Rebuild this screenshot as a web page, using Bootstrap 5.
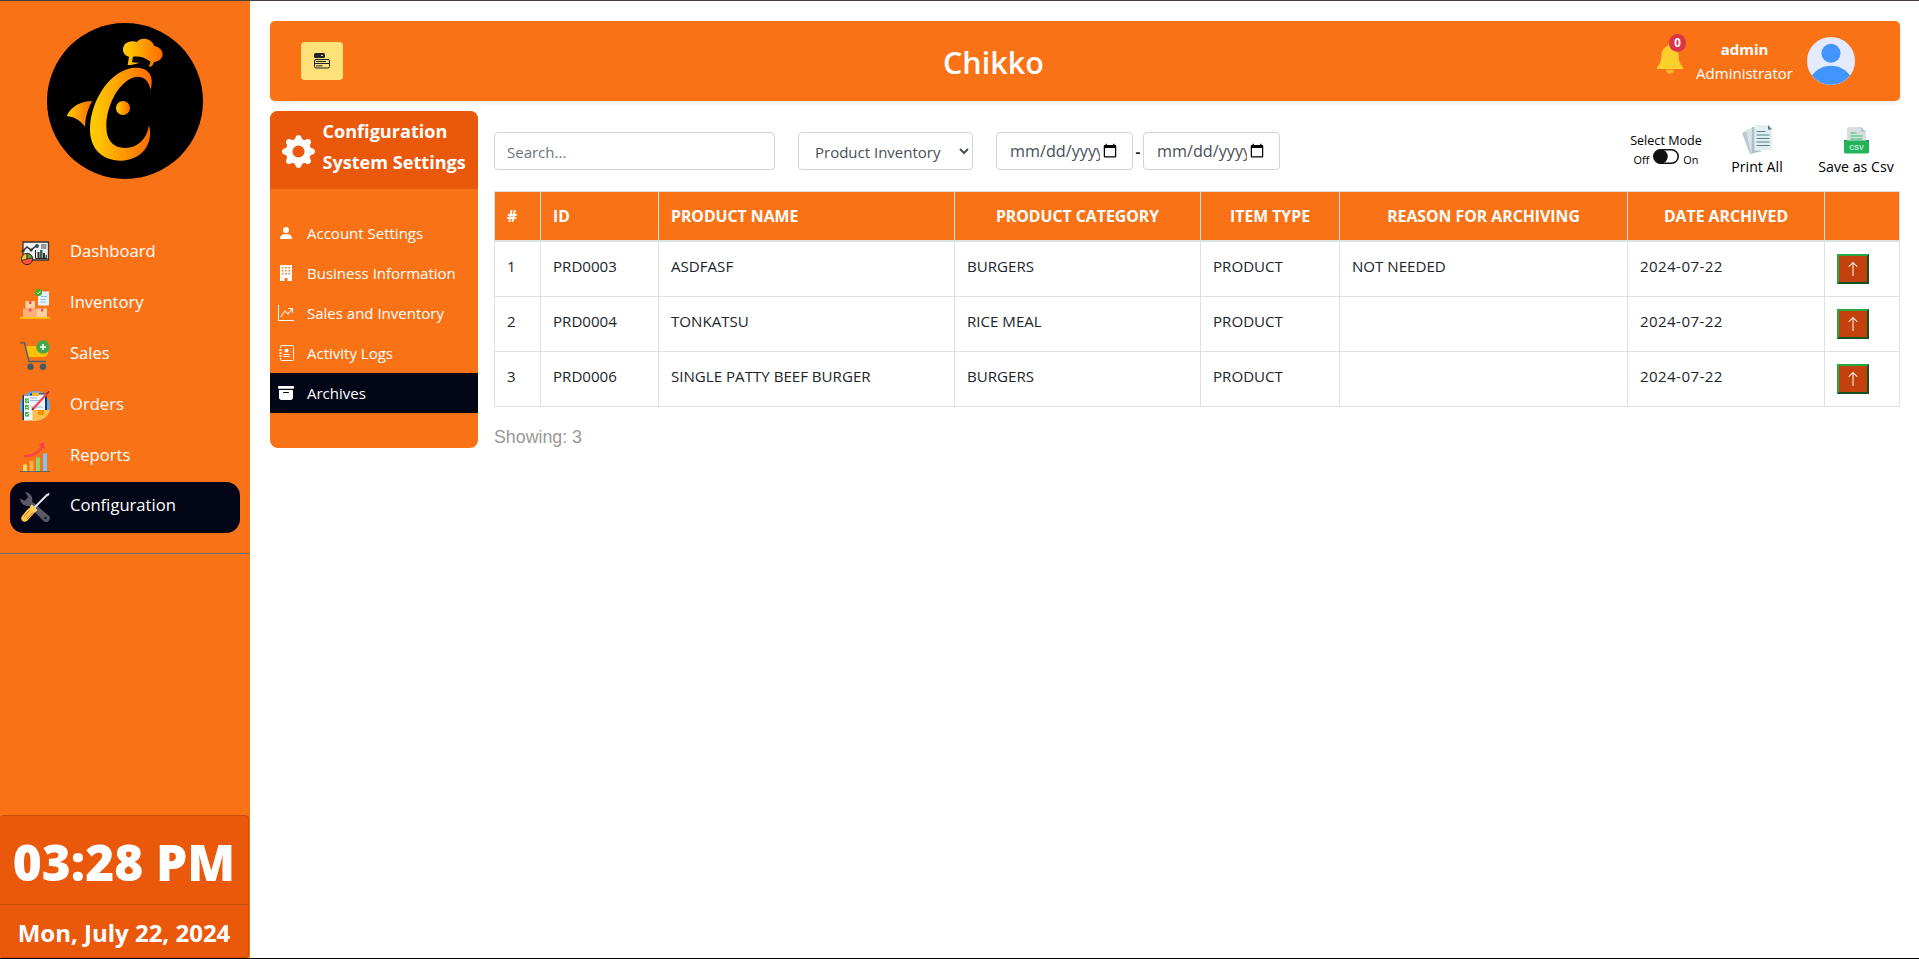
<!DOCTYPE html>
<html lang="en">
<head>
<meta charset="utf-8">
<meta name="viewport" content="width=device-width, initial-scale=1">
<title>Chikko</title>
<link href="https://cdn.jsdelivr.net/npm/bootstrap@5.3.0/dist/css/bootstrap.min.css" rel="stylesheet">
<style>
  :root { --brand: #f97316; --brand-dark: #ea580c; --ink: #020617; }
  html, body { height: 100%; }
  body { font-family: "Open Sans", "Noto Sans", sans-serif; font-size: 15px; color: #212529; overflow: hidden; }
  .app { height: 959px; border-top: 1px solid #47403e; border-bottom: 1px solid #000; }

  /* sidebar */
  .side { width: 250px; background: var(--brand); }
  .logo { width: 156px; height: 156px; margin: 22px 0 49px 47px; flex: none; }
  .side-link { height: 50.8px; margin: 0 10px; padding: 0 10px; gap: 20px; border-radius: 14px; color: #fff; font-size: 16.6px; text-decoration: none; }
  .side-link svg { width: 30px; height: 30px; }
  .side-link span { padding-bottom: 3px; }
  .side-link.active { background: var(--ink); }
  .side-rule { height: 1px; background: #5b7276; margin-top: 20px; flex: none; }
  .clock { width: 249px; height: 143px; background: var(--brand-dark); border: 1px solid #cb4d0d; border-left: 0; border-radius: 4px; color: #fff; text-align: center; }
  .clock-time { height: 89px; line-height: 93px; border-bottom: 1px solid #cb4d0d; font-size: 49.5px; font-weight: 800; white-space: nowrap; }
  .clock-date { line-height: 55px; font-size: 24px; font-weight: 700; white-space: nowrap; }

  /* top bar */
  .main { padding: 20px 20px 0 20px; }
  .topbar { height: 80px; background: var(--brand); border-radius: 5px; color: #fff; box-shadow: 0 2px 4px rgba(0,0,0,.08); padding: 0 45px 0 31px; }
  .menu-btn { width: 42px; height: 38px; border-radius: 4px; background: #fde27a; border: 0; padding: 0; }
  .title { font-size: 30.5px; font-weight: 600; margin: 3px 0 0 600px; line-height: 1; }
  .bell { width: 26px; height: 30px; margin: -5px -1px 0 1px; }
  .count { left: 12px; top: -10px; width: 17px; height: 18px; border-radius: 9px; background: #dc3545; font-size: 11.5px; line-height: 18px; font-weight: 700; text-align: center; }
  .who { margin: 0 14px 0 14px; width: 97px; text-align: center; line-height: 24px; white-space: nowrap; }

  /* settings panel */
  .panel { width: 208px; height: 337px; margin-top: 10px; border-radius: 8px; background: var(--brand); overflow: hidden; color: #fff; }
  .panel-head { height: 78px; background: var(--brand-dark); padding: 5px 0 0 12px; gap: 7.5px; font-size: 18.1px; line-height: 31px; font-weight: 700; white-space: nowrap; }
  .panel-head svg { margin-top: 19px; flex: none; }
  .panel-link { height: 40px; padding: 0 8px; gap: 13px; color: #fff; text-decoration: none; white-space: nowrap; }
  .panel-link.active { background: var(--ink); }

  /* filters and tools */
  .filters { margin-top: 31px; height: 59px; }
  .field { height: 38px; border: 1px solid #ced4da; border-radius: 4px; background: #fff; padding: 7px 12px 5px; color: #495057; font-size: 15px; }
  .field::placeholder { color: #6c757d; }
  .search { width: 281px; margin-right: 23px; }
  select.kind { appearance: auto; width: 175px; margin-right: 23px; padding: 8px 0 6px 12px; }
  .range { height: 38px; }
  .day { width: 137px; padding: 6px 12px 6px 13px; font-size: 16.2px; }
  .dash { width: 10px; text-align: center; }
  .tool { text-align: center; color: #000; white-space: nowrap; font-size: 14.2px; line-height: 22px; }
  .tool svg { display: block; }
  .tool.mode { font-size: 12.6px; line-height: 16px; width: 76px; padding-top: 1px; }
  .mode small { font-size: 10.9px; padding-top: 3px; }
  .toggle-row { gap: 4px; justify-content: center; }
  .print { width: 60px; margin: -7px 0 0 23px; }
  .csv { width: 90px; margin: -5px -1px 0 24px; }
  .print svg { margin: 0 auto 1px; }
  .csv svg { margin: 0 auto 2px; }

  /* archive list */
  .archive { border-collapse: collapse; table-layout: fixed; width: 1406px; font-size: 15.1px; margin: 0; text-transform: uppercase; }
  .archive th, .archive td { border: 1px solid #dee2e6; padding: 12px; vertical-align: top; }
  .archive th { background: var(--brand); color: #fff; height: 49px; border-bottom-width: 2px; text-align: center; font-size: 15.8px; font-weight: 700; white-space: nowrap; line-height: 24px; }
  .archive th:nth-child(-n+3) { text-align: left; }
  .archive td { height: 55px; line-height: 24px; white-space: nowrap; }
  .archive td:nth-child(7) { letter-spacing: .4px; }
  .restore { display: block; width: 32px; height: 30px; padding: 0; background: #c2410c; border: 2px outset #28a745; color: #fff; line-height: 1; }
  .showing { margin-top: 17px; font-family: "Liberation Sans", Arial, sans-serif; font-size: 17.8px; color: #999; }
</style>
</head>
<body>
<svg width="0" height="0" class="position-absolute">
  <defs>
    <linearGradient id="gold"><stop offset="0" stop-color="#ffd000"/><stop offset="1" stop-color="#ff6a00"/></linearGradient>
    <symbol id="up" viewBox="0 0 16 16"><path fill="currentColor" d="M8 15a.5.5 0 0 0 .5-.5V2.707l3.146 3.147a.5.5 0 0 0 .708-.708l-4-4a.5.5 0 0 0-.708 0l-4 4a.5.5 0 1 0 .708.708L7.500 2.707V14.500a.5.5 0 0 0 .5.5z"/></symbol>
  </defs>
</svg>
<div class="app d-flex">
  <aside class="side d-flex flex-column flex-shrink-0">
    <svg class="logo" viewBox="141 69 468 468">
      <circle cx="375" cy="303" r="234"/>
      <g fill="url(#gold)">
        <path d="M452 270C464 222 442 203 408 203C335 203 270 300 270 388C270 446 306 482 362 482C426 482 462 430 447 376C440 420 412 444 375 444C338 444 318 420 319 376C321 300 370 230 415 230C438 231 448 250 452 270Z"/>
        <path d="M200 348C214 319 243 303 277 303C263 328 256 352 255 380C241 362 223 350 200 348Z"/>
        <circle cx="369" cy="324" r="21"/>
        <path d="M383 195L387 170C362 166 361 125 397 124C403 124 408 125 411 126C421 111 454 113 463 138C497 144 496 183 462 186C460 192 458 198 450 201L447 199L452 185C435 172 416 167 399 170L396 187L418 188C406 193 395 195 383 195Z"/>
      </g>
    </svg>
    <nav>
      <a href="#" class="side-link d-flex align-items-center">
        <svg viewBox="0 0 30 30"><path fill="#eef0f2" stroke="#3a3434" stroke-width="1.3" d="M3 4h25.500v18H3z"/><path fill="#9a9a9a" d="M21 6h5.500v5H21z"/><path d="M3 13l4-4 4 3 5-4" fill="none" stroke="#333" stroke-width="1.500"/><circle cx="3" cy="13" r="1.600" fill="#333"/><circle cx="11" cy="12" r="1.500" fill="#333"/><circle cx="17" cy="8" r="1.900" fill="#2d4b63"/><path d="M15.500 12v8.500h12" fill="none" stroke="#222"/><path fill="#4a2720" d="M17.500 14h2v6h-2zM23 15h2v5h-2z"/><path fill="#286b60" d="M20 12h2.500v8H20zM25.500 17h1.500v3h-1.500z"/><circle cx="7" cy="21" r="5.600" fill="#ff5248" stroke="#39241c"/><path d="M7 21v-5.500a5.500 5.500 0 0 0-5.300 7z" fill="#f6c83c" stroke="#39241c" stroke-width=".8"/><path d="M7 21v-5.500a5.500 5.500 0 0 1 5.400 4.500z" fill="#54a540" stroke="#39241c" stroke-width=".8"/></svg>
        <span>Dashboard</span></a>
      <a href="#" class="side-link d-flex align-items-center">
        <svg viewBox="0 0 30 30"><path fill="#e3f1fc" d="M18 2.500h11v14H18z"/><path stroke="#8dbbe8" d="M21 7.500h6M20.500 10.500H26M20.500 13h5"/><circle cx="18.500" cy="3.500" r="3.500" fill="#3eae2b"/><path d="M17 3.500l1.200 1.200 2-2.200" fill="none" stroke="#fff"/><path fill="#fcd0a1" d="M5.500 12H15v7.500H5.500zM17 19.500h10V28H17z"/><path fill="#fbaf7b" d="M3 19.500h14V28H3z"/><path fill="#f34e62" d="M9 12h2.500v3H9zM9 19.500h2.500v3H9zM21 19.500h2.300v3H21z"/><path fill="#ffc107" d="M0 28h30v2H0z"/></svg>
        <span>Inventory</span></a>
      <a href="#" class="side-link d-flex align-items-center">
        <svg viewBox="0 0 30 30"><path fill="#ffc107" d="M5 6h22l1 8-2.500 3H8z"/><path d="M0 2.800h4.500L9 21.500h17" fill="none" stroke="#4e6068" stroke-width="1.500"/><circle cx="10.500" cy="26.800" r="3.200" fill="#455a64"/><circle cx="23" cy="26.800" r="3.200" fill="#455a64"/><circle cx="23" cy="7" r="6.800" fill="#43aa49"/><path stroke="#fff" stroke-width="1.600" d="M23 4v6M20 7h6"/></svg>
        <span>Sales</span></a>
      <a href="#" class="side-link d-flex align-items-center">
        <svg viewBox="0 0 30 30"><circle cx="15" cy="15" r="15" fill="#60a8ee"/><path d="M12 19h18a15 15 0 0 1-15 11h-3z" fill="#ffbf4d"/><path fill="#f49200" d="M18 19h6v5h-6z"/><path fill="#173a66" d="M2.500 4H11v25H2.500zM10 2.500h17V19H10z"/><path fill="#f0f4fb" d="M4 4.500h8.500V29.500H4zM12 3.500h13V19H12z"/><path fill="#4bb23d" d="M5 7.500h4V12H5zM5 14h4v4.500H5zM5 21h4v4.500H5z"/><path d="M5.800 9.500l1 1 2.200-2M5.800 16l1 1 2.200-2M5.800 23l1 1 2.200-2" stroke="#fff" fill="none" stroke-width=".8"/><path stroke="#83b5df" stroke-width=".9" d="M10 7h7M10 9.500h9M11 16h12"/><path fill="#f4b32a" d="M12 1.500h7v3.500h-7z"/><path d="M12.500 18.500L27.500 2" stroke="#f24952" stroke-width="2.400"/><path d="M26.500 3L29 .500M12 19l1.500-2" stroke="#922838" stroke-width="1.600"/></svg>
        <span>Orders</span></a>
      <a href="#" class="side-link d-flex align-items-center">
        <svg viewBox="0 0 30 30"><path fill="#ffd966" d="M3 22.500h4V29H3z"/><path fill="#ffb04c" d="M9.500 19h4v10h-4z"/><path fill="#95d36b" d="M16 15.500h4V29h-4z"/><path fill="#7fc5fa" d="M23 11.500h4V29h-4z"/><path fill="#59676b" d="M0 29h30v1H0z"/><path d="M4 14.200c8 .300 14.500-3.500 18.500-9.500" fill="none" stroke="#fa3d50" stroke-width="2.200"/><path fill="#fa3d50" d="M18.500 2.500L24 0l1 7z"/></svg>
        <span>Reports</span></a>
      <a href="#" class="side-link d-flex align-items-center active">
        <svg viewBox="0 0 30 30"><path d="M5 0a7.500 7.500 0 0 1 7 9.500L28.500 23.500a3.700 3.700 0 0 1-5 5.500L9 13.800A7.500 7.500 0 0 1 0 6.500l4.800 2.300L8.200 5z" fill="#5b5967"/><circle cx="25.500" cy="26" r="1.300" fill="#111827"/><path d="M14.500 15.500L27 3" stroke="#e6e9ee" stroke-width="2"/><path d="M26 2.500L29 .800l.500 1L28 4.500z" fill="#e6e9ee"/><path d="M11 14.500l5 4.500-3.500 4-5 5.500c-4 3.500-8-.500-5.500-4.500l5-6z" fill="#ffc74d"/><path d="M4 24.500l5.500-6M7 27l6-6.500" stroke="#e06a3b" stroke-width="1"/><path d="M11 13.500l5.500 5.500" stroke="#fbd76c" stroke-width="2.600"/></svg>
        <span>Configuration</span></a>
    </nav>
    <div class="side-rule"></div>
    <div class="clock mt-auto">
      <div class="clock-time">03:28 PM</div>
      <div class="clock-date">Mon, July 22, 2024</div>
    </div>
  </aside>

  <main class="main flex-grow-1">
    <header class="topbar d-flex align-items-center">
      <button class="menu-btn d-flex align-items-center justify-content-center" aria-label="Menu">
        <svg width="16" height="16" viewBox="0 0 16 16"><rect width="11" height="5" rx="1.500" fill="#212529"/><path fill="#fde27a" d="M7 2h2v1H7z"/><rect x=".5" y="6.500" width="15" height="8.500" rx="1.500" fill="none" stroke="#212529"/><path stroke="#212529" d="M2 8.500h10M0 10.500h16M2 12.900h6.500"/></svg>
      </button>
      <h1 class="title">Chikko</h1>
      <div class="d-flex align-items-center ms-auto">
        <div class="bell position-relative">
          <svg width="26" height="30" viewBox="0 0 26 30"><path fill="#fbd02d" d="M13 0c1.500 0 2.300 1 2.300 2.200 4.400 1.300 5.900 5 6.200 9 .400 6 1.500 8.300 4.500 12.300v1.500H0v-1.500c3-4 4.100-6.300 4.500-12.300.300-4 1.800-7.700 6.200-9C10.700 1 11.500 0 13 0z"/><path fill="#f6ba24" d="M9 25.800h8c-.300 2.800-2 4-4 4s-3.700-1.200-4-4z"/></svg>
          <span class="count position-absolute">0</span>
        </div>
        <div class="who"><b>admin</b><br>Administrator</div>
        <svg width="48" height="48" viewBox="0 0 48 48"><circle cx="24" cy="24" r="24" fill="#e4eaff"/><circle cx="24" cy="16.300" r="9.500" fill="#4294ff"/><path fill="#4294ff" d="M5 38.500C14 25.500 34 25.500 43 38.500a24 24 0 0 1-38 0z"/></svg>
      </div>
    </header>

    <div class="d-flex">
      <section class="panel flex-shrink-0">
        <div class="panel-head d-flex align-items-start">
          <svg width="33" height="33" viewBox="0 0 16 16" fill="#fff"><path d="M9.405 1.050c-.413-1.400-2.397-1.400-2.810 0l-.1.340a1.464 1.464 0 0 1-2.105.872l-.310-.170c-1.283-.698-2.686.705-1.987 1.987l.169.311c.446.820.023 1.841-.872 2.105l-.340.1c-1.400.413-1.400 2.397 0 2.810l.340.1a1.464 1.464 0 0 1 .872 2.105l-.170.310c-.698 1.283.705 2.686 1.987 1.987l.311-.169a1.464 1.464 0 0 1 2.105.872l.1.340c.413 1.400 2.397 1.400 2.810 0l.1-.340a1.464 1.464 0 0 1 2.105-.872l.310.170c1.283.698 2.686-.705 1.987-1.987l-.169-.311a1.464 1.464 0 0 1 .872-2.105l.340-.1c1.400-.413 1.400-2.397 0-2.810l-.340-.1a1.464 1.464 0 0 1-.872-2.105l.170-.310c.698-1.283-.705-2.686-1.987-1.987l-.311.169a1.464 1.464 0 0 1-2.105-.872l-.1-.340zM8 10.930a2.929 2.929 0 1 1 0-5.860 2.929 2.929 0 0 1 0 5.858z"/></svg>
          <div>Configuration<br>System Settings</div>
        </div>
        <nav class="pt-4">
          <a href="#" class="panel-link d-flex align-items-center"><svg width="16" height="16" viewBox="0 0 16 16" fill="#fff"><path d="M3 14s-1 0-1-1 1-4 6-4 6 3 6 4-1 1-1 1H3Zm5-6a3 3 0 1 0 0-6 3 3 0 0 0 0 6Z"/></svg><span>Account Settings</span></a>
          <a href="#" class="panel-link d-flex align-items-center"><svg width="16" height="16" viewBox="0 0 16 16"><path fill="#fff" d="M2 0h12v16H9.500v-3h-3v3H2z"/><path fill="#f97316" d="M4 2h1.500v1.500H4zM7.200 2h1.500v1.500H7.200zM10.500 2H12v1.500h-1.500zM4 5h1.500v1.500H4zM7.200 5h1.500v1.500H7.200zM10.500 5H12v1.500h-1.500zM4 8h1.500v1.500H4zM7.200 8h1.500v1.500H7.200zM10.500 8H12v1.500h-1.500z"/></svg><span>Business Information</span></a>
          <a href="#" class="panel-link d-flex align-items-center"><svg width="16" height="16" viewBox="0 0 16 16" fill="#fff"><path d="M0 0h1v15h15v1H0V0Zm10 3.500a.5.5 0 0 1 .5-.5h4a.5.5 0 0 1 .5.5v4a.5.5 0 0 1-1 0V4.900l-3.613 4.417a.5.5 0 0 1-.740.037L7.060 6.767l-3.656 5.027a.5.5 0 0 1-.808-.588l4-5.500a.5.5 0 0 1 .758-.060l2.609 2.610L13.445 4H10.500a.5.5 0 0 1-.5-.5Z"/></svg><span>Sales and Inventory</span></a>
          <a href="#" class="panel-link d-flex align-items-center"><svg width="16" height="16" viewBox="0 0 16 16" fill="none" stroke="#fff"><path d="M2.500 3V1.500a1 1 0 0 1 1-1h11a1 1 0 0 1 1 1v13a1 1 0 0 1-1 1h-11a1 1 0 0 1-1-1V13M1 5h3M1 8h3M1 11h3M2.500 4.500v1M2.500 7.500v1M2.500 10.500v1M5.500 11.500h6M5.500 9.500h6"/><circle cx="8.500" cy="5.500" r="2" fill="#fff" stroke="none"/></svg><span>Activity Logs</span></a>
          <a href="#" class="panel-link d-flex align-items-center active"><svg width="16" height="16" viewBox="0 0 16 16" fill="#fff"><path d="M12.643 15C13.979 15 15 13.845 15 12.500V5H1v7.500C1 13.845 2.021 15 3.357 15h9.286zM5.500 7h5a.5.5 0 0 1 0 1h-5a.5.5 0 0 1 0-1zM.8 1a.8.8 0 0 0-.8.8V3a.8.8 0 0 0 .8.8h14.400A.8.8 0 0 0 16 3V1.800a.8.8 0 0 0-.8-.8H.8z"/></svg><span>Archives</span></a>
        </nav>
      </section>

      <section class="flex-grow-1 ms-3">
        <div class="filters d-flex">
          <input class="field search" type="text" placeholder="Search...">
          <select class="field kind"><option>Product Inventory</option></select>
          <div class="range d-flex align-items-center"><input class="field day" type="date"><b class="dash">-</b><input class="field day" type="date"></div>
          <div class="d-flex ms-auto">
            <div class="tool mode">Select Mode
              <div class="d-flex toggle-row"><small>Off</small><svg width="26" height="15" viewBox="0 0 26 15"><rect x=".8" y=".8" width="24.400" height="13.400" rx="6.700" fill="#fff" stroke="#111" stroke-width="1.600"/><circle cx="7.800" cy="7.500" r="7" fill="#111"/></svg><small>On</small></div>
            </div>
            <div class="tool print">
              <svg width="31" height="30" viewBox="0 0 31 30"><path fill="#b9cbd0" d="M0 8l8-4 6 21-6 4.500z"/><path fill="#d8e5e9" d="M4 5l8-3 6 24-9 3z"/><path fill="#a9c0c7" d="M10 2h2.500v23l8 1-11 2.500z"/><path fill="#e2eef0" d="M12.500 0H26l4 4v21l-17.500.5z"/><path fill="#527882" d="M26 0l4 4.500h-4z"/><path stroke="#557e89" stroke-width="1.200" d="M14.500 6.500h9M14.500 10h13M14.500 13.500h13M14.500 17h13M14.500 20.500h13"/></svg>
              <div>Print All</div>
            </div>
            <div class="tool csv">
              <svg width="25" height="27" viewBox="0 0 25 27"><path fill="#d6dee2" d="M5 0h12l5 5v9H3V2a2 2 0 0 1 2-2z"/><path fill="#b9c4ca" d="M17 0l5 5h-5z"/><path stroke="#6ccb90" stroke-width="1.600" d="M6.500 6h6M6.500 9h12M6.500 12h12"/><path fill="#1f7a3f" d="M0 13h3v2H0zM22 13h3v2h-3z"/><rect y="13.500" width="25" height="13" rx="1.500" fill="#23b35b"/><text x="12.500" y="23" text-anchor="middle" font-family="Liberation Sans, sans-serif" font-size="7" font-weight="700" fill="#c6f2d4">CSV</text></svg>
              <div>Save as Csv</div>
            </div>
          </div>
        </div>
        <table class="archive">
          <colgroup><col width="46"><col width="118"><col width="296"><col width="246"><col width="139"><col width="288"><col width="197"><col width="75"></colgroup>
          <thead><tr><th>#</th><th>ID</th><th>Product Name</th><th>Product Category</th><th>Item Type</th><th>Reason for Archiving</th><th>Date Archived</th><th></th></tr></thead>
          <tbody>
            <tr><td>1</td><td>PRD0003</td><td>asdfasf</td><td>Burgers</td><td>Product</td><td>Not needed</td><td>2024-07-22</td><td><button class="restore"><svg width="16" height="16"><use href="#up"/></svg></button></td></tr>
            <tr><td>2</td><td>PRD0004</td><td>Tonkatsu</td><td>Rice Meal</td><td>Product</td><td></td><td>2024-07-22</td><td><button class="restore"><svg width="16" height="16"><use href="#up"/></svg></button></td></tr>
            <tr><td>3</td><td>PRD0006</td><td>Single Patty Beef Burger</td><td>Burgers</td><td>Product</td><td></td><td>2024-07-22</td><td><button class="restore"><svg width="16" height="16"><use href="#up"/></svg></button></td></tr>
          </tbody>
        </table>
        <div class="showing">Showing: 3</div>
      </section>
    </div>
  </main>
</div>
</body>
</html>
